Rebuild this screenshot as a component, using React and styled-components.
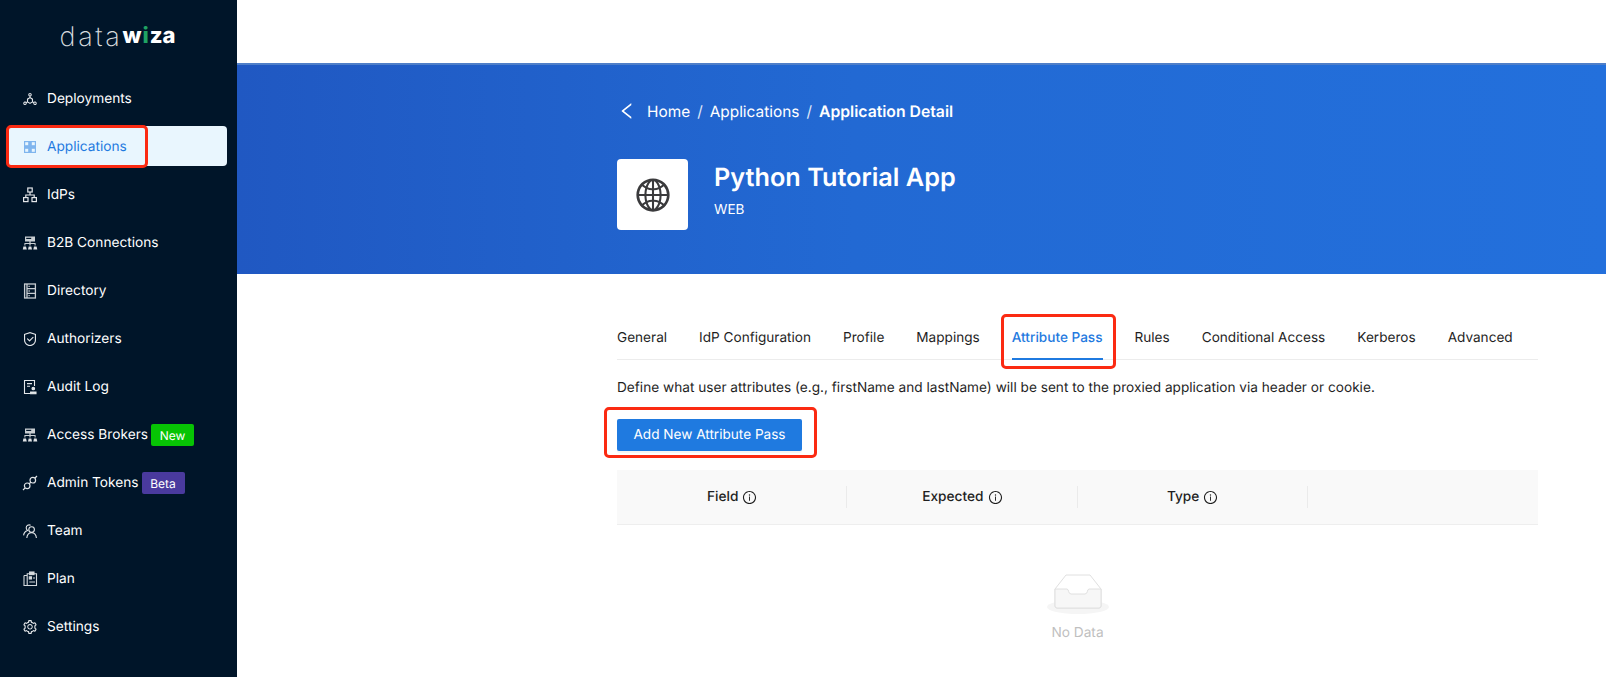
import styled, { createGlobalStyle } from "styled-components";
import {
  AiOutlineDeploymentUnit,
  AiOutlineSafety,
  AiOutlineSetting,
  AiOutlineLeft,
  AiOutlineGlobal,
  AiOutlineInfoCircle,
} from "react-icons/ai";

const GlobalStyle = createGlobalStyle`
  html, body {
    margin: 0;
    padding: 0;
    background: #fff;
    font-family: Inter, "Liberation Sans", sans-serif;
    text-rendering: geometricPrecision;
  }
  * { box-sizing: border-box; }
`;

const Page = styled.div`
  display: flex;
  width: 100vw;
  height: 100vh;
  overflow: hidden;
`;

const Sidebar = styled.aside`
  width: 237px;
  flex-shrink: 0;
  background: #001529;
  padding: 0 10px 0 8px;
`;

const Logo = styled.div`
  height: 78px;
  padding-bottom: 6px;
  display: flex;
  align-items: center;
  justify-content: center;
  color: #fff;
`;

const LogoThin = styled.span`
  font-size: 27px;
  font-weight: 200;
  letter-spacing: 2.6px;
  color: #d8dcdf;
`;

const LogoBold = styled.span`
  font-size: 22px;
  font-weight: 800;
`;

const LogoDot = styled.span`
  font-size: 22px;
  font-weight: 800;
  color: #1fa363;
  margin: 0 1px;
`;

const Nav = styled.nav`
  display: flex;
  flex-direction: column;
  gap: 8px;
`;

const NavItem = styled.div`
  position: relative;
  height: 40px;
  padding: 2px 0 0 14px;
  display: flex;
  align-items: center;
  gap: 9px;
  border-radius: 4px;
  font-size: 13.7px;
  font-weight: 400;
  color: ${(p) => (p.$active ? "#1f7ae0" : "#fff")};
  background: ${(p) => (p.$active ? "#e9f6fe" : "transparent")};
  svg {
    flex-shrink: 0;
    font-size: 16px;
    color: ${(p) => (p.$active ? "#1f7ae0" : "#e4e7ea")};
  }
`;

const Badge = styled.span`
  display: inline-flex;
  align-items: center;
  justify-content: center;
  width: 43px;
  height: 22px;
  margin: 0 0 0 -6px;
  border-radius: 2px;
  font-size: 12px;
  color: #fff;
  background: ${(p) => p.$color};
`;

const Callout = styled.span`
  position: absolute;
  left: ${(p) => p.$left}px;
  top: ${(p) => p.$top}px;
  width: ${(p) => p.$width}px;
  height: ${(p) => p.$height}px;
  border: 3px solid #fb2a12;
  border-radius: 5px;
  pointer-events: none;
`;

const Main = styled.main`
  flex: 1;
  min-width: 0;
`;

const TopBar = styled.div`
  height: 63px;
  background: #fff;
`;

const Banner = styled.section`
  height: 211px;
  padding: 34px 68px 0 380px;
  background: linear-gradient(90deg, #2058c2 0%, #2269d3 45%, #2370dc 100%);
  border-top: 2px solid #4f7fc9;
  color: #fff;
`;

const Breadcrumb = styled.div`
  display: flex;
  align-items: center;
  height: 24px;
  font-size: 15.4px;
  svg {
    font-size: 16px;
    margin: 0 12px 0 2px;
    transform: scale(1.3);
  }
`;

const Crumb = styled.span`
  font-size: ${(p) => (p.$current ? "15.75px" : "inherit")};
  font-weight: ${(p) => (p.$current ? 600 : 400)};
`;

const Slash = styled.span`
  margin: 0 7px;
  opacity: 0.85;
`;

const AppHead = styled.div`
  display: flex;
  gap: 26px;
  margin-top: 36px;
`;

const AppTile = styled.div`
  width: 71px;
  height: 71px;
  border-radius: 4px;
  background: #fff;
  display: flex;
  align-items: center;
  justify-content: center;
  color: #3a3a3c;
  font-size: 38px;
`;

const AppText = styled.div`
  display: flex;
  flex-direction: column;
`;

const AppTitle = styled.h1`
  margin: 0;
  padding-top: 1px;
  font-size: 25.25px;
  line-height: 36px;
  font-weight: 600;
`;

const AppKind = styled.div`
  margin-top: 5px;
  font-size: 13.6px;
  line-height: 18px;
`;

const Content = styled.section`
  padding: 40px 68px 0 380px;
`;

const Tabs = styled.div`
  display: flex;
  gap: 32px;
  height: 46px;
  border-bottom: 1px solid #ececec;
`;

const Tab = styled.div`
  position: relative;
  height: 46px;
  line-height: 48px;
  font-size: 13.6px;
  white-space: nowrap;
  font-weight: ${(p) => (p.$active ? 500 : 400)};
  color: ${(p) => (p.$active ? "#1f7ae0" : "#1f1f1f")};
  border-bottom: ${(p) => (p.$active ? "2px solid #1f7ae0" : "none")};
`;

const Description = styled.p`
  margin: 18px 0 0;
  font-size: 13.65px;
  line-height: 20px;
  color: #1f1f1f;
`;

const ButtonWrap = styled.div`
  position: relative;
  width: max-content;
  margin-top: 21px;
`;

const PrimaryButton = styled.button`
  display: block;
  width: 185px;
  height: 32px;
  border: none;
  border-radius: 2px;
  background: #1f7ae0;
  color: #fff;
  font-family: inherit;
  font-size: 13.6px;
  font-weight: 400;
  text-rendering: geometricPrecision;
  box-shadow: 0 2px 0 rgba(0, 0, 0, 0.04);
`;

const TableHead = styled.div`
  display: grid;
  grid-template-columns: repeat(4, 1fr);
  height: 55px;
  margin-top: 19px;
  background: #f9f9f9;
  border-bottom: 1px solid #eeeeee;
`;

const HeadCell = styled.div`
  position: relative;
  display: flex;
  align-items: center;
  justify-content: center;
  gap: 4px;
  font-size: 13.7px;
  font-weight: 500;
  color: #1f1f1f;
  svg { font-size: 15px; }
  &::after {
    content: ${(p) => (p.$last ? "none" : '""')};
    position: absolute;
    right: 0;
    top: 16px;
    height: 22px;
    width: 1px;
    background: #ebebeb;
  }
`;

const Empty = styled.div`
  display: flex;
  flex-direction: column;
  align-items: center;
  padding-top: 49px;
`;

const EmptyText = styled.div`
  margin-top: 8px;
  font-size: 13.7px;
  line-height: 20px;
  color: #bfbfbf;
`;

const AppsIcon = () => (
  <svg width="16" height="16" viewBox="0 0 16 16">
    <rect x="2" y="2" width="12" height="12" fill="#7fb5ee" />
    <rect x="3.2" y="3.2" width="3" height="3" fill="#e9f6fe" />
    <rect x="9.8" y="3.2" width="3" height="3" fill="#e9f6fe" />
    <rect x="3.2" y="9.8" width="3" height="3" fill="#e9f6fe" />
    <rect x="9.8" y="9.8" width="3" height="3" fill="#e9f6fe" />
  </svg>
);

const NetworkIcon = () => (
  <svg width="16" height="16" viewBox="0 0 16 16" fill="none" stroke="currentColor" strokeWidth="1.2">
    <rect x="5.8" y="1" width="4.4" height="4" />
    <rect x="1.6" y="10.6" width="4.4" height="4" />
    <rect x="10" y="10.6" width="4.4" height="4" />
    <path d="M8 5v3M3.8 10.6V8h8.4v2.6" />
  </svg>
);

const BrokerIcon = () => (
  <svg width="16" height="16" viewBox="0 0 16 16" fill="#dfe3e6">
    <path d="M3 1.5h10v5H8.6V8h5v2.6h-1V9h-4v1.6h-1.2V9h-4v1.6h-1V8h5V6.5H3z" opacity="0.9" />
    <rect x="4.2" y="2.8" width="5" height="1.2" fill="#001529" />
    <path d="M1.4 11.5h2.6L4.8 14.6H.8zM6.7 11.5h2.6l.7 3.1H6zM12 11.5h2.6l.7 3.1h-4z" />
  </svg>
);

const DirectoryIcon = () => (
  <svg width="16" height="16" viewBox="0 0 16 16" fill="none" stroke="#c8ced3" strokeWidth="1.3">
    <rect x="2.6" y="1" width="10.8" height="14" />
    <path d="M5 1v14M5 5.6h8.4M5 10.3h8.4" />
    <path d="M6.6 3.3h1M6.6 8h1M6.6 12.7h1" stroke="#fff" />
  </svg>
);

const AuditIcon = () => (
  <svg width="16" height="16" viewBox="0 0 16 16" fill="none" stroke="#e4e7ea" strokeWidth="1.1">
    <path d="M8 14.5H2.5v-13h10V7" />
    <path d="M5 4.6h5M5 7.2h3" />
    <circle cx="11.3" cy="9.5" r="1.3" fill="#e4e7ea" />
    <path d="M8.6 13h5.4v1.8H8.6z" fill="#e4e7ea" />
  </svg>
);

const TokenIcon = () => (
  <svg width="16" height="16" viewBox="0 0 16 16" fill="none" stroke="#dfe3e6" strokeWidth="1.2">
    <circle cx="5.2" cy="10.8" r="2.8" />
    <circle cx="10.8" cy="5.2" r="2.8" />
    <path d="M7 9l2-2M1 15l2.2-2.2M13 3l2-2" />
  </svg>
);

const TeamIcon = () => (
  <svg width="16" height="16" viewBox="0 0 16 16" fill="none" stroke="#e4e7ea" strokeWidth="1.1">
    <circle cx="9.6" cy="6.6" r="2.8" />
    <path d="M4.8 15c.3-3.4 2.2-5.2 4.8-5.2s4.5 1.8 4.8 5.2" />
    <path d="M8.6 2.2A3 3 0 0 0 4.2 4.8c0 1.2.5 2 1.3 2.6C3.2 8.2 1.8 10 1.6 12.4" />
  </svg>
);

const PlanIcon = () => (
  <svg width="16" height="16" viewBox="0 0 16 16" fill="none" stroke="#d4d9dd" strokeWidth="1.1">
    <path d="M2 4.5h3M5.2 14.5H2V4.5M5.2 14.5V2.8h9.3v11.7z" />
    <rect x="7.6" y="1" width="4.4" height="2.6" fill="#d4d9dd" />
    <rect x="7.3" y="5.8" width="2.2" height="2.2" fill="#d4d9dd" />
    <path d="M11 7h2M7.3 11h5.7" />
  </svg>
);

const EmptyIcon = () => (
  <svg width="64" height="41" viewBox="0 0 64 41" fill="none">
    <ellipse cx="32" cy="33" rx="31" ry="7" fill="#f5f5f5" />
    <path d="M9 15 L20 1 H44 L55 15 V32 a2 2 0 0 1 -2 2 H11 a2 2 0 0 1 -2 -2 Z" fill="#fff" stroke="#e0e0e0" />
    <path d="M9 15 H21 C23 15 22 20 25 20 H39 C42 20 41 15 43 15 H55 V32 a2 2 0 0 1 -2 2 H11 a2 2 0 0 1 -2 -2 Z" fill="#f7f7f7" stroke="#e0e0e0" />
  </svg>
);

const navItems = [
  { label: "Deployments", icon: <AiOutlineDeploymentUnit /> },
  { label: "Applications", icon: <AppsIcon />, active: true },
  { label: "IdPs", icon: <NetworkIcon /> },
  { label: "B2B Connections", icon: <BrokerIcon /> },
  { label: "Directory", icon: <DirectoryIcon /> },
  { label: "Authorizers", icon: <AiOutlineSafety /> },
  { label: "Audit Log", icon: <AuditIcon /> },
  { label: "Access Brokers", icon: <BrokerIcon />, badge: "New", badgeColor: "#07c404" },
  { label: "Admin Tokens", icon: <TokenIcon />, badge: "Beta", badgeColor: "#4a3a9e" },
  { label: "Team", icon: <TeamIcon /> },
  { label: "Plan", icon: <PlanIcon /> },
  { label: "Settings", icon: <AiOutlineSetting /> },
];

const tabs = [
  "General",
  "IdP Configuration",
  "Profile",
  "Mappings",
  "Attribute Pass",
  "Rules",
  "Conditional Access",
  "Kerberos",
  "Advanced",
];

const columns = ["Field", "Expected", "Type"];

export default function App() {
  return (
    <Page>
      <GlobalStyle />
      <Sidebar>
        <Logo>
          <LogoThin>data</LogoThin>
          <LogoBold>w</LogoBold>
          <LogoDot>i</LogoDot>
          <LogoBold>za</LogoBold>
        </Logo>
        <Nav>
          {navItems.map((item) => (
            <NavItem key={item.label} $active={item.active}>
              {item.icon}
              {item.label}
              {item.badge && <Badge $color={item.badgeColor}>{item.badge}</Badge>}
              {item.active && <Callout $left={-2} $top={-1} $width={142} $height={43} />}
            </NavItem>
          ))}
        </Nav>
      </Sidebar>
      <Main>
        <TopBar />
        <Banner>
          <Breadcrumb>
            <AiOutlineLeft />
            <Crumb>Home</Crumb>
            <Slash>/</Slash>
            <Crumb>Applications</Crumb>
            <Slash>/</Slash>
            <Crumb $current>Application Detail</Crumb>
          </Breadcrumb>
          <AppHead>
            <AppTile>
              <AiOutlineGlobal />
            </AppTile>
            <AppText>
              <AppTitle>Python Tutorial App</AppTitle>
              <AppKind>WEB</AppKind>
            </AppText>
          </AppHead>
        </Banner>
        <Content>
          <Tabs>
            {tabs.map((tab) => (
              <Tab key={tab} $active={tab === "Attribute Pass"}>
                {tab}
                {tab === "Attribute Pass" && <Callout $left={-11} $top={0} $width={115} $height={55} />}
              </Tab>
            ))}
          </Tabs>
          <Description>
            Define what user attributes (e.g., firstName and lastName) will be sent to the proxied application via header or cookie.
          </Description>
          <ButtonWrap>
            <PrimaryButton>Add New Attribute Pass</PrimaryButton>
            <Callout $left={-13} $top={-12} $width={213} $height={51} />
          </ButtonWrap>
          <TableHead>
            {columns.map((col) => (
              <HeadCell key={col}>
                {col}
                <AiOutlineInfoCircle />
              </HeadCell>
            ))}
            <HeadCell $last />
          </TableHead>
          <Empty>
            <EmptyIcon />
            <EmptyText>No Data</EmptyText>
          </Empty>
        </Content>
      </Main>
    </Page>
  );
}
